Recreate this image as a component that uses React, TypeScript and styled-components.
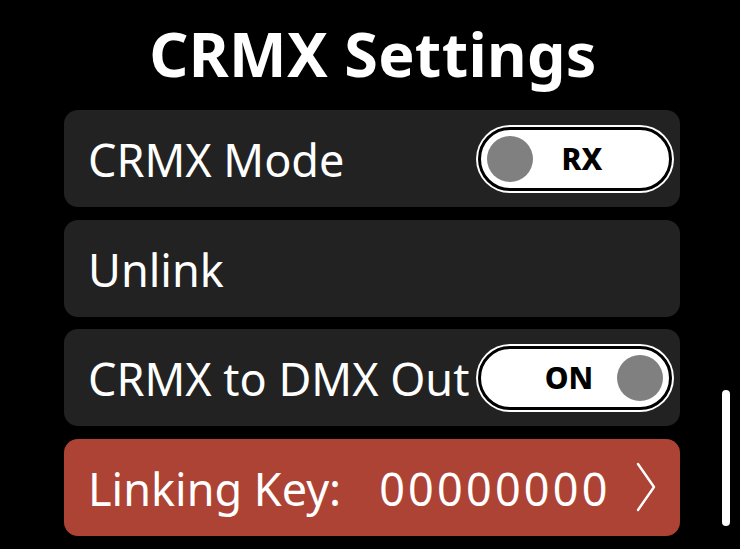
import React from 'react';
import styled, { createGlobalStyle } from 'styled-components';

const GlobalStyle = createGlobalStyle`
  html, body {
    margin: 0;
    padding: 0;
    background: #000;
  }
  body {
    font-family: 'Noto Sans', 'Open Sans', sans-serif;
    color: #fff;
  }
`;

const Screen = styled.div`
  position: relative;
  width: 740px;
  height: 549px;
  overflow: hidden;
  background: #000;
`;

const Title = styled.h1`
  margin: 0;
  padding-top: 13px;
  height: 110px;
  box-sizing: border-box;
  text-align: center;
  font-size: 61px;
  line-height: 82px;
  font-weight: 700;
  letter-spacing: 0.3px;
  padding-left: 6px;
`;

const List = styled.div`
  display: flex;
  flex-direction: column;
  gap: 12.5px;
  width: 616px;
  margin-left: 64px;
`;

const Row = styled.div<{ $accent?: boolean }>`
  display: flex;
  align-items: center;
  justify-content: space-between;
  height: 97px;
  box-sizing: border-box;
  padding: 0 8px 0 24px;
  border-radius: 14px;
  background: ${(p) => (p.$accent ? '#ad4334' : '#222222')};
`;

const Label = styled.span`
  font-size: 45px;
  line-height: 1;
  white-space: nowrap;
  padding-top: 2px;
`;

const KeyValue = styled.span`
  margin-left: 38px;
  letter-spacing: 3.2px;
`;

const Toggle = styled.div<{ $on?: boolean }>`
  display: flex;
  flex-direction: ${(p) => (p.$on ? 'row-reverse' : 'row')};
  align-items: center;
  width: 194px;
  height: 64px;
  box-sizing: border-box;
  padding: 0 6px;
  border: 3px solid #000;
  border-radius: 32px;
  background: #fff;
  box-shadow: 0 0 0 2px #fff;
`;

const Knob = styled.div`
  width: 46px;
  height: 46px;
  border-radius: 50%;
  background: #808080;
  flex: none;
`;

const ToggleText = styled.span<{ $on?: boolean }>`
  flex: 1;
  text-align: center;
  color: #000;
  font-size: 30px;
  font-weight: 800;
  ${(p) => (p.$on ? 'padding-left: 34px;' : 'padding-right: 32px;')}
`;

const Chevron = styled.svg`
  width: 24px;
  height: 50px;
  margin-right: 14px;
`;

const ScrollBar = styled.div`
  position: absolute;
  left: 722px;
  top: 390px;
  width: 8px;
  height: 136px;
  border-radius: 4px;
  background: #fff;
`;

const App: React.FC = () => {
  return (
    <Screen>
      <GlobalStyle />
      <Title>CRMX Settings</Title>
      <List>
        <Row>
          <Label>CRMX Mode</Label>
          <Toggle>
            <Knob />
            <ToggleText>RX</ToggleText>
          </Toggle>
        </Row>
        <Row>
          <Label>Unlink</Label>
        </Row>
        <Row>
          <Label>CRMX to DMX Out</Label>
          <Toggle $on>
            <Knob />
            <ToggleText $on>ON</ToggleText>
          </Toggle>
        </Row>
        <Row $accent>
          <Label>
            Linking Key:<KeyValue>00000000</KeyValue>
          </Label>
          <Chevron viewBox="0 0 24 50" fill="none">
            <path d="M4 2 L20 25 L4 48" stroke="#fff" strokeWidth="2.4" strokeLinecap="round" strokeLinejoin="round" />
          </Chevron>
        </Row>
      </List>
      <ScrollBar />
    </Screen>
  );
};

export default App;
